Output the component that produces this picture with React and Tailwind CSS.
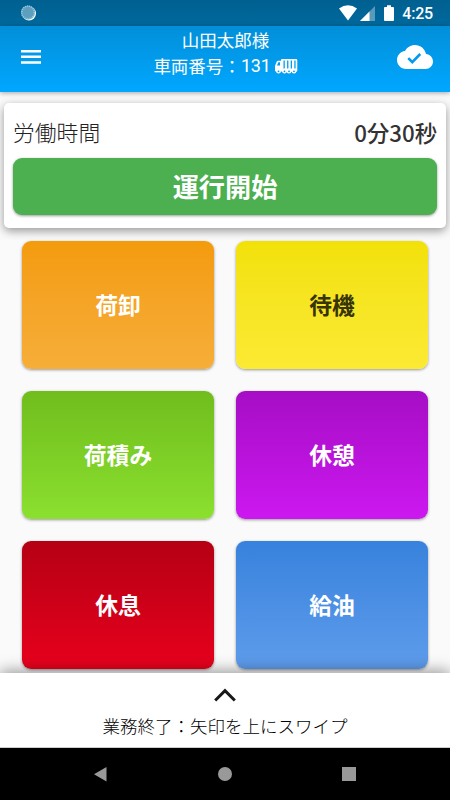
const tiles = [
    { label: '荷卸', color: 'from-[#f49b0b] to-[#f6ae38] text-white' },
    { label: '待機', color: 'from-[#f2e107] to-[#fbea32] text-[#38340a]' },
    { label: '荷積み', color: 'from-[#70bd1d] to-[#8be02f] text-white' },
    { label: '休憩', color: 'from-[#a60dc5] to-[#cc18f0] text-white' },
    { label: '休息', color: 'from-[#b50014] to-[#e8001d] text-white' },
    { label: '給油', color: 'from-[#3782dd] to-[#5e9ceb] text-white' },
];

function StatusBar() {
    return (
        <div className="flex h-[26px] shrink-0 items-center bg-linear-to-b from-[#006090] to-[#00699d] pl-5 pr-[17px] text-white">
            <svg width="17" height="17" viewBox="0 0 17 17">
                <circle cx="9" cy="8.500" r="7" fill="#fff" />
                <circle cx="8" cy="7.500" r="7" fill="#5d9fbe" />
                <circle cx="8" cy="7.500" r="6.300" fill="none" stroke="#a5cbdc" strokeWidth="1.500" strokeDasharray="1 1" />
            </svg>
            <svg className="ml-auto" width="60" height="18" viewBox="0 0 60 18" fill="currentColor">
                <path d="M1 4.500Q10 -2 19 4.500L10 16.500Z" />
                <path d="M37 2v15H22z" opacity=".35" />
                <path d="M31.500 7.500V17H22z" />
                <path d="M49 1.200h4v1.800h2q1 0 1 1v12q0 1-1 1h-8q-1 0-1-1V4q0-1 1-1h2z" />
            </svg>
            <span className="ml-1 mt-0.5 font-['Roboto'] text-[16px] font-medium leading-none tracking-[-0.2px]">4:25</span>
        </div>
    );
}

function Truck() {
    return (
        <svg width="23" height="15" viewBox="0 0 23 15" fill="#fff">
            <path fillRule="evenodd" d="M7 0h14q1.300 0 1.300 1.300V11.500q0 1-1 1H1q-1 0-1-1V7l1.500-4q.5-1.200 1.800-1.200H6V1q0-1 1-1zM3.300 3.200L2 6.500h3V3.200zM8.500 1.500v8h1.300v-8zm3.600 0v8h1.300v-8zm3.600 0v8h1.300v-8zm3.600 0v8h1.300v-8z" />
            {[3.500, 9.500, 14, 19].map((x) => (
                <g key={x}>
                    <circle cx={x} cy="12.200" r="2.400" />
                    <circle cx={x} cy="12.300" r="0.900" fill="#0399e9" />
                </g>
            ))}
        </svg>
    );
}

function Header() {
    return (
        <header className="relative z-10 flex h-[66px] shrink-0 items-center justify-between bg-linear-to-b from-[#028fd9] to-[#00a7ff] pl-[21px] pr-[17px] text-white shadow-[0_1px_5px_rgba(0,0,0,0.35)]">
            <svg className="mt-[-4px]" width="20" height="14" fill="#fff">
                <path d="M0 0h20v2.500H0zM0 5.600h20v2.500H0zM0 11.300h20v2.500H0z" />
            </svg>
            <div className="ml-[13px] mt-[-12px] text-center text-[17.500px] font-normal leading-[26px]">
                <div>山田太郎様</div>
                <div className="flex items-center">
                    車両番号：
                    <span className="mr-[4px] font-['Roboto'] text-[18px] tracking-[-0.2px]">131</span>
                    <Truck />
                </div>
            </div>
            <svg className="mt-[-4px]" width="36" height="24" viewBox="0 4 24 16" fill="#fff">
                <path d="M19.350 10.040C18.670 6.590 15.640 4 12 4 9.110 4 6.600 5.640 5.350 8.040 2.340 8.360 0 10.910 0 14c0 3.310 2.690 6 6 6h13c2.760 0 5-2.240 5-5 0-2.640-2.050-4.780-4.650-4.960zM10.200 16.600l-3.300-3.300 1.200-1.200 2.100 2.100 4.700-4.800 1.200 1.200z" />
            </svg>
        </header>
    );
}

export default function App() {
    return (
        <div className="flex h-[800px] w-[450px] flex-col overflow-hidden bg-[#fafafa] font-['Noto_Sans_CJK_JP',sans-serif]">
            <StatusBar />
            <Header />

            <main className="min-h-0 flex-1 overflow-hidden px-1 pt-[11px]">
                <section className="h-[125px] rounded-[5px] bg-white px-[9px] pt-[11px] shadow-[0_3px_10px_rgba(0,0,0,0.4)]">
                    <div className="flex h-[43.500px] items-center justify-between pb-[7px] text-[21.800px] leading-none text-[#222]">
                        <span className="font-light">労働時間</span>
                        <span className="text-[22.300px] font-medium text-[#333]">0分30秒</span>
                    </div>
                    <button className="block h-[57px] w-full rounded-[9px] bg-[#4caf50] pt-0.5 text-[26.200px] font-bold text-white shadow-[0_1px_3px_rgba(0,0,0,0.4)]">
                        運行開始
                    </button>
                </section>

                <div className="mt-[13px] grid grid-cols-2 gap-[22px] px-[18px]">
                    {tiles.map((tile) => (
                        <button
                            key={tile.label}
                            className={`h-32 rounded-[9px] bg-linear-to-b pt-px text-[22.800px] font-bold shadow-[0_1px_3px_rgba(0,0,0,0.4)] ${tile.color}`}
                        >
                            {tile.label}
                        </button>
                    ))}
                </div>
            </main>

            {/* 業務終了パネル */}
            <footer className="relative z-10 flex h-[75px] shrink-0 flex-col items-center border-b border-[#ccc] bg-white pt-[15px] shadow-[0_-2px_14px_rgba(0,0,0,0.4)]">
                <svg width="22" height="14" viewBox="0 0 22 14" fill="none" stroke="#181818" strokeWidth="3">
                    <path d="M1.200 12.500L11 2.700l9.800 9.800" />
                </svg>
                <p className="mt-[11px] text-[17.500px] font-light leading-[25px] text-black">業務終了：矢印を上にスワイプ</p>
            </footer>

            <nav className="flex h-[52px] shrink-0 items-center justify-between bg-black pl-[94px] pr-[94px]">
                <svg width="13" height="16" fill="#999">
                    <path d="M12.500 1v14.500L0 8.200z" />
                </svg>
                <div className="size-[14px] rounded-full bg-[#999]" />
                <div className="size-[14px] bg-[#999]" />
            </nav>
        </div>
    );
}
